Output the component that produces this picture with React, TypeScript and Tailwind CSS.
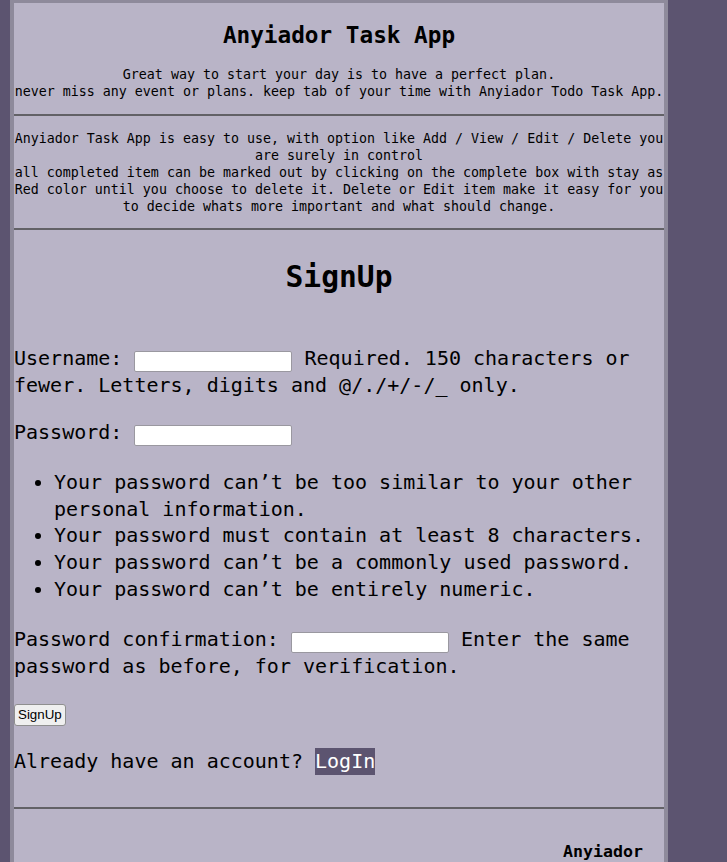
import React from "react";

const Hr = ({ mt }: { mt: string }) => (
  <div className={`${mt} h-[2px] w-full bg-[#626166]`} />
);

export default function App() {
  const inputCls =
    "w-[158px] h-[21px] border border-[#9a98a0] rounded-[2px] bg-white px-[2px] align-baseline text-[13.33px] font-['Liberation_Sans',sans-serif] outline-none";
  return (
    <div className="min-h-screen bg-[#5c5470]">
      <div className="ml-[10px] w-[658px] min-h-[862px] border-x-4 border-t-[3px] border-[#8e8a9b] bg-[#b9b4c7] text-black font-['DejaVu_Sans_Mono',monospace]">
        {/* header */}
        <h2 className="mt-[18.6px] text-center text-[22.7px] leading-[27px] font-bold">
          Anyiador Task App
        </h2>
        <p className="mt-[17.4px] text-center text-[13.3px] leading-[17px]">
          Great way to start your day is to have a perfect plan.
          <br />
          never miss any event or plans. keep tab of your time with Anyiador Todo Task App.
        </p>
        <Hr mt="mt-[14px]" />
        <p className="mt-[14.2px] text-center text-[13.3px] leading-[17px]">
          Anyiador Task App is easy to use, with option like Add / View / Edit / Delete you are surely in control
          <br />
          all completed item can be marked out by clicking on the complete box with stay as Red color until you choose to delete it. Delete or Edit item make it easy for you to decide whats more important and what should change.
        </p>
        <Hr mt="mt-[12.8px]" />

        {/* signup */}
        <h1 className="mt-[29.5px] text-center text-[29.6px] leading-[36px] font-bold">
          SignUp
        </h1>
        <div className="text-[20px] leading-[26.8px]">
          <p className="mt-[49.2px]">
            Username: <input type="text" className={inputCls} /> Required. 150 characters or fewer. Letters, digits and @/./+/-/_ only.
          </p>
          <p className="mt-[20.4px]">
            Password: <input type="password" className={inputCls} />
          </p>
          <ul className="mt-[23.2px] list-disc pl-[40px]">
            <li>Your password can’t be too similar to your other personal information.</li>
            <li>Your password must contain at least 8 characters.</li>
            <li>Your password can’t be a commonly used password.</li>
            <li>Your password can’t be entirely numeric.</li>
          </ul>
          <p className="mt-[23px]">
            Password confirmation: <input type="password" className={inputCls} /> Enter the same password as before, for verification.
          </p>
          <div className="mt-[24.2px] flex">
            <button className="h-[22px] px-[3px] border border-[#8f8f8f] rounded-[3px] bg-[#efefef] text-[13.33px] leading-[15px] font-['Liberation_Sans',sans-serif]">
              SignUp
            </button>
          </div>
          <p className="mt-[22.5px]">
            Already have an account?{" "}
            <span className="inline-block bg-[#5c5470] text-white">LogIn</span>
          </p>
        </div>
        <Hr mt="mt-[32.2px]" />
        <div className="mt-[33.2px] flex justify-end pr-[21px]">
          <span className="text-[16.6px] leading-[20px] font-bold">Anyiador</span>
        </div>
      </div>
    </div>
  );
}
